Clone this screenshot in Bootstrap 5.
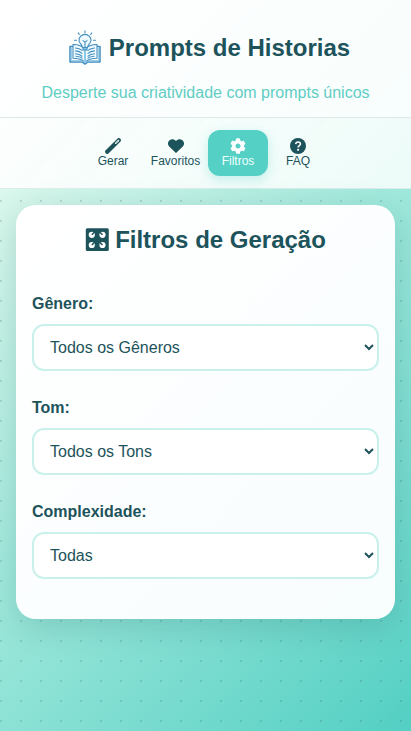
<!DOCTYPE html>
<html lang="pt-BR">
<head>
<meta charset="utf-8">
<meta name="viewport" content="width=device-width, initial-scale=1">
<title>Prompts de Historias</title>
<link rel="stylesheet" href="https://cdn.jsdelivr.net/npm/bootstrap@5.3.0/dist/css/bootstrap.min.css">
<style>
:root { --ink: #1d535b; --teal: #55d0c5; --mint: #a0e8dc; }
html, body { height: 100%; }
body {
  font-family: "Liberation Sans", Arial, sans-serif;
  color: var(--ink);
  line-height: 1.6;
  overflow: hidden;
  background:
    conic-gradient(from 270deg at 2px 2px, rgba(29,83,91,.17) 90deg, transparent 0) 0 0 / 20px 20px,
    linear-gradient(135deg, #f7fff5 0%, #a2e9dc 50%, #53cfc3 100%);
}
.top-panel { background: linear-gradient(135deg, #fff 0%, #f8fefd 100%); height: 118px; border-bottom: 1px solid #dce9e8; padding-top: 24px; }
.brand-title { font-size: 24px; font-weight: 700; line-height: 38px; height: 48px; color: var(--ink); gap: 7px; padding-left: 7px; }
.brand-title svg { margin-bottom: 2px; }
.tagline { font-size: 16px; line-height: 26px; margin-top: 8px; color: #5fcdc4; }
.menu-bar { height: 71px; padding-top: 12px; background: linear-gradient(135deg, rgba(255,255,255,.9), rgba(248,255,253,.87)); border-bottom: 1px solid rgba(200,228,224,.6); }
.menu-btn { width: 60px; height: 46px; border-radius: 12px; font-size: 12px; line-height: 14px; color: var(--ink); padding-top: 8px; text-decoration: none; }
.menu-btn.wide { width: 65px; }
.menu-btn.current { background: var(--teal); color: #effffd; box-shadow: 0 4px 12px rgba(85,208,197,.3); }
.filter-card { margin: 16px 16px 0; height: 414px; border-radius: 20px; padding: 16px; background: linear-gradient(135deg, #fff, #f8fdfe); box-shadow: 0 8px 32px rgba(29,83,91,.19); }
.filter-title { font-size: 24px; font-weight: 700; line-height: 38px; gap: 6px; margin-bottom: 32px; }
.filter-field { height: 104px; }
.filter-field label { display: block; font-size: 16px; font-weight: 700; line-height: 25px; margin-bottom: 8px; }
.filter-field select { display: block; width: 100%; height: 47px; padding: 0 0 0 12px; border: 2px solid #caf0eb; border-radius: 12px; background-color: #fff; color: var(--ink); font-size: 16px; }
</style>
<script src="https://cdn.jsdelivr.net/npm/bootstrap@5.3.0/dist/js/bootstrap.bundle.min.js"></script>
</head>
<body>
<header class="top-panel text-center">
  <h1 class="brand-title d-flex justify-content-center align-items-center mb-0">
    <svg width="34" height="35" viewBox="0 0 34 36" preserveAspectRatio="none" fill="none" stroke="#438fc0" stroke-width="1.1" stroke-linecap="round" stroke-linejoin="round">
      <path d="M5 17H2v16h12c1 0 2 2 3 2s2-2 3-2h12V17h-3" stroke="#438fc0" stroke-width="1.5"/>
      <path d="M3.500 18.500v13h11M30.500 18.500v13h-11" stroke="#9bd0eb"/>
      <path d="M17 33c-3-3-7-4-12-4V15c5 0 9 1 12 5 3-4 7-5 12-5v14c-5 0-9 1-12 4z" fill="#f1faff"/>
      <path d="M17 20v13" stroke="#8fc9e8" stroke-width="2"/>
      <path d="M7.500 18.500q4 .3 6.500 2.500M7.500 21.500q4 .3 6.500 2.500M7.500 24.500q4 .3 6.500 2.500M8 27q4 .3 6 2M26.500 18.500q-4 .3-6.500 2.500M26.500 21.500q-4 .3-6.500 2.500M26.500 24.500q-4 .3-6.500 2.500M26 27q-4 .3-6 2"/>
      <path d="M14.500 18c0-3-3.500-4-3.500-7.500a6 6 0 0 1 12 0c0 3.500-3.500 4.500-3.500 7.500z" fill="#effaff"/>
      <path d="M15 18h4v2.500h-4z" fill="#83c2e4"/>
      <path d="M17 17v-5m-2-1 2 1.500 2-1.500"/>
      <path d="M17 .7v2M10.300 3l1 1.700M23.700 3l-1 1.700M6.500 10.500h2M25.500 10.500h2"/>
    </svg>
    <span>Prompts de Historias</span>
  </h1>
  <p class="tagline mb-0">Desperte sua criatividade com prompts únicos</p>
</header>
<nav class="menu-bar d-flex justify-content-center">
  <a class="menu-btn d-flex flex-column align-items-center" href="#"><svg width="16" height="16" viewBox="0 0 16 16"><path d="M2.200 13.800 13.800 2.200" stroke="#1d535b" stroke-width="4.200" stroke-linecap="round"/><path d="m10.700 5.300 2.700-2.700" stroke="#fff" stroke-width="1.500" stroke-linecap="round"/><path d="m11.500 4.500 1-1" stroke="#1d535b" stroke-width=".5"/></svg><span>Gerar</span></a>
  <a class="menu-btn wide d-flex flex-column align-items-center" href="#"><svg width="16" height="16" viewBox="0 0 16 16" fill="#1d535b"><path d="M8 15 1.200 8.500C-.8 6.500-.2 3.200 2 1.900c2-1.200 4.300-.7 6 1.100 1.700-1.800 4-2.300 6-1.100 2.200 1.300 2.800 4.600.8 6.600z"/></svg><span>Favoritos</span></a>
  <a class="menu-btn current d-flex flex-column align-items-center" href="#"><svg width="16" height="16" viewBox="0 0 512 512" fill="#fff"><path d="M487.400 315.700l-42.600-24.600c4.300-23.200 4.300-47 0-70.200l42.600-24.600c4.900-2.800 7.100-8.600 5.500-14-11.100-35.600-30-67.800-54.700-94.600-3.800-4.100-10-5.100-14.800-2.300L380.800 110c-17.900-15.400-38.500-27.300-60.800-35.100V25.800c0-5.600-3.900-10.500-9.400-11.700-36.700-8.200-74.300-7.800-109.200 0-5.500 1.200-9.400 6.100-9.400 11.700V75c-22.200 7.900-42.800 19.800-60.800 35.100L88.700 85.500c-4.900-2.800-11-1.900-14.800 2.300-24.700 26.700-43.600 58.900-54.700 94.600-1.700 5.400.6 11.200 5.500 14L67.300 221c-4.300 23.200-4.300 47 0 70.200l-42.600 24.600c-4.900 2.800-7.100 8.600-5.500 14 11.100 35.600 30 67.800 54.700 94.600 3.800 4.100 10 5.100 14.800 2.300l42.600-24.600c17.900 15.400 38.500 27.300 60.800 35.100v49.200c0 5.600 3.900 10.500 9.400 11.700 36.700 8.200 74.300 7.800 109.200 0 5.500-1.200 9.400-6.100 9.400-11.700v-49.200c22.200-7.900 42.800-19.800 60.800-35.100l42.600 24.600c4.900 2.800 11 1.900 14.800-2.300 24.700-26.700 43.600-58.900 54.700-94.600 1.500-5.500-.7-11.300-5.600-14.100zM256 336c-44.100 0-80-35.900-80-80s35.900-80 80-80 80 35.900 80 80-35.900 80-80 80z"/></svg><span>Filtros</span></a>
  <a class="menu-btn d-flex flex-column align-items-center" href="#"><svg width="16" height="16" viewBox="0 0 16 16"><circle cx="8" cy="8" r="8" fill="#1d535b"/><path d="M5.700 6.200C5.900 4.400 7 4 8.100 4c1.300 0 2.300.8 2.300 2 0 1.500-2.300 1.600-2.300 3.400" fill="none" stroke="#fff" stroke-width="1.600"/><circle cx="8.100" cy="11.800" r="1.100" fill="#fff"/></svg><span>FAQ</span></a>
</nav>
<main class="filter-card">
  <h2 class="filter-title d-flex justify-content-center align-items-center">
    <svg width="24" height="24" viewBox="0 0 24 24"><rect x=".8" y=".3" width="23" height="22.700" rx="1.500" fill="#1d535b"/><g fill="#fff"><circle cx="6.800" cy="6.800" r="3.100"/><circle cx="17.500" cy="6.800" r="3.100"/><circle cx="6.800" cy="17" r="3.100"/><circle cx="17.500" cy="17" r="3.100"/></g><path d="m6.800 6.800 2.800-2.800M17.500 6.800 14.700 4M6.800 17l2.800-2.800M17.500 17l-2.800-2.800" stroke="#1d535b" stroke-width="1.500"/></svg>
    <span>Filtros de Geração</span>
  </h2>
  <div class="filter-field"><label for="genero">Gênero:</label><select id="genero"><option>Todos os Gêneros</option></select></div>
  <div class="filter-field"><label for="tom">Tom:</label><select id="tom"><option>Todos os Tons</option></select></div>
  <div class="filter-field"><label for="complexidade">Complexidade:</label><select id="complexidade"><option>Todas</option></select></div>
</main>
</body>
</html>
